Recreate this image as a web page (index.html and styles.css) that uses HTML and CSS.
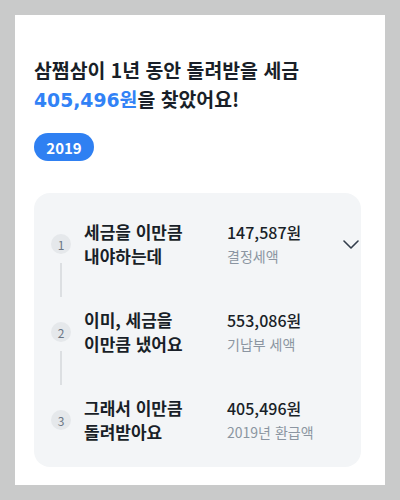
FILE: index.html
```html
<!DOCTYPE html>
<html lang="ko">
<head>
<meta charset="utf-8">
<link rel="stylesheet" href="styles.css">
</head>
<body>
<main class="card">
  <h1 class="title">삼쩜삼이 1년 동안 돌려받을 세금<br><span class="accent"><span class="wide">405,496</span>원</span>을 찾았어요!</h1>
  <div class="pill">2019</div>
  <section class="steps">
    <div class="step">
      <div class="rail"><span class="num">1</span><span class="line"></span></div>
      <div class="label">세금을 이만큼<br>내야하는데</div>
      <div class="value"><div class="amount">147,587원</div><div class="sub">결정세액</div></div>
      <svg class="chev" width="16" height="9" viewBox="0 0 16 9"><polyline points="1,1 8,8 15,1" fill="none" stroke="#333d4b" stroke-width="1.6" stroke-linecap="round" stroke-linejoin="round"/></svg>
    </div>
    <div class="step">
      <div class="rail"><span class="num">2</span><span class="line"></span></div>
      <div class="label">이미, 세금을<br>이만큼 냈어요</div>
      <div class="value"><div class="amount">553,086원</div><div class="sub">기납부 세액</div></div>
    </div>
    <div class="step last">
      <div class="rail"><span class="num">3</span></div>
      <div class="label">그래서 이만큼<br>돌려받아요</div>
      <div class="value"><div class="amount">405,496원</div><div class="sub">2019년 환급액</div></div>
    </div>
  </section>
</main>
</body>
</html>
```
FILE: styles.css
```css
* { box-sizing: border-box; }
html, body { margin: 0; }
body {
  background: #c9caca;
  padding: 15px;
  font-family: "Noto Sans CJK KR", "Noto Sans", sans-serif;
  color: #191f28;
}
.card {
  background: #fff;
  width: 370px;
  height: 470px;
  padding: 40px 24px 18px 19px;
  display: flex;
  flex-direction: column;
  align-items: flex-start;
}
.title {
  margin: 0;
  font-size: 19.4px;
  line-height: 29px;
  font-weight: 700;
}
.accent { color: #3182f6; }
.wide {
  font-family: "DejaVu Sans", "Noto Sans CJK KR", sans-serif;
  font-size: 18.8px;
}
.pill {
  margin-top: 18px;
  width: 60px;
  height: 31px;
  border-radius: 16px;
  background: #2f80f2;
  color: #fff;
  font-size: 15px;
  font-weight: 700;
  display: flex;
  align-items: center;
  justify-content: center;
}
.steps {
  margin-top: 32px;
  width: 327px;
  background: #f3f5f7;
  border-radius: 16px;
  padding: 27px 2px 23px 17px;
  display: flex;
  flex-direction: column;
}
.step {
  display: flex;
  align-items: flex-start;
  padding-bottom: 40px;
}
.step.last { padding-bottom: 0; }
.rail {
  width: 20px;
  align-self: stretch;
  display: flex;
  flex-direction: column;
  align-items: center;
  padding-top: 14px;
  margin-bottom: -40px;
}
.step.last .rail { margin-bottom: 0; }
.num {
  width: 20px;
  height: 20px;
  border-radius: 50%;
  background: #e5e8eb;
  color: #6b7684;
  font-size: 12px;
  display: flex;
  align-items: center;
  justify-content: center;
  flex: none;
}
.line {
  flex: 1;
  width: 1.5px;
  background: #dcdfe2;
  margin: 9px 0 11px;
}
.label {
  margin-left: 13px;
  width: 143px;
  font-size: 17px;
  font-weight: 700;
  line-height: 24px;
}
.value { line-height: 24px; }
.amount {
  font-size: 16px;
  font-weight: 500;
}
.sub {
  font-size: 14px;
  color: #8b95a1;
}
.chev {
  margin-left: auto;
  margin-top: 20px;
}
```
